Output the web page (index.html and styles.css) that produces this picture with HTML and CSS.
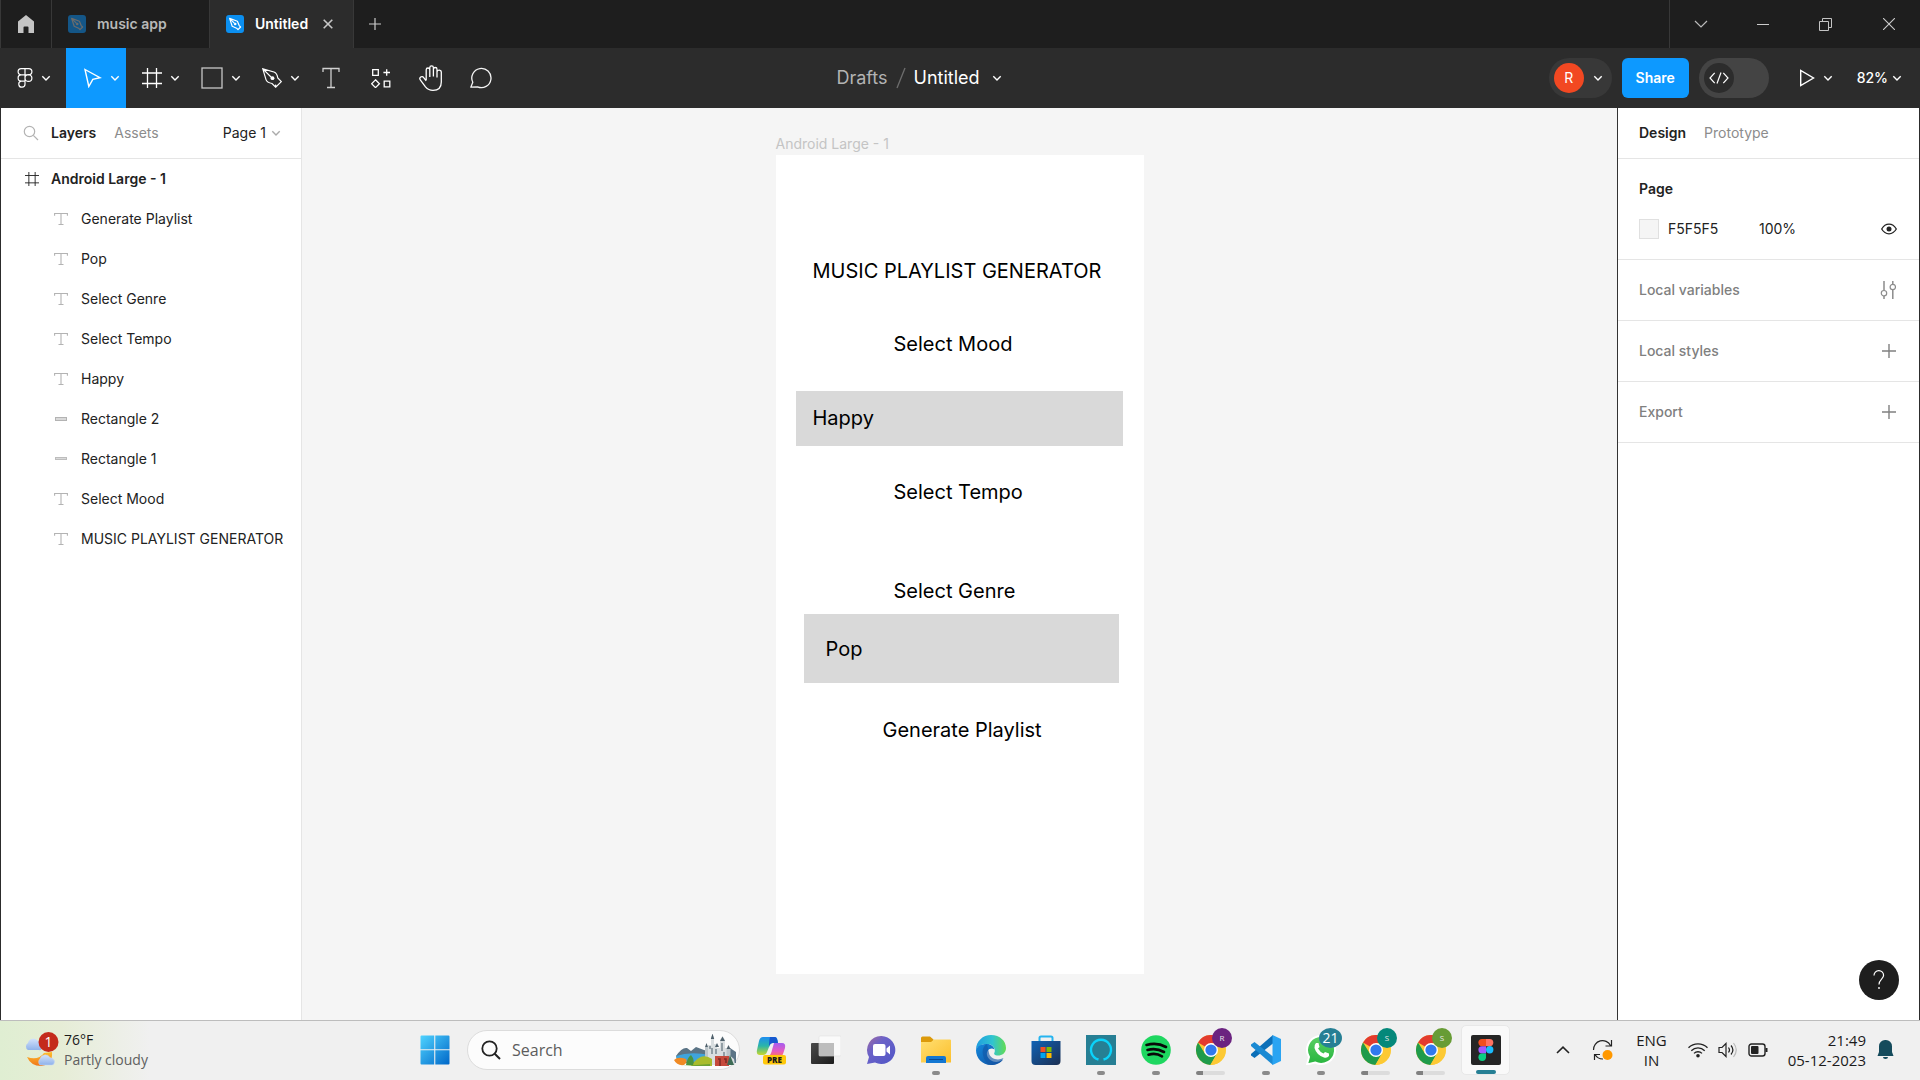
FILE: index.html
```html
<!DOCTYPE html>
<html lang="en">
<head>
<meta charset="utf-8">
<title>Untitled</title>
<meta name="viewport" content="width=device-width, initial-scale=1">
<link rel="stylesheet" href="styles.css">
</head>
<body>
<svg class="defs" aria-hidden="true">
  <defs>
    <linearGradient id="g-win" x1="0" y1="0" x2="1" y2="1"><stop offset="0" stop-color="#4fd3ff"/><stop offset="1" stop-color="#0067c8"/></linearGradient>
    <linearGradient id="g-moon" x1="0" y1="0" x2="0" y2="1"><stop offset="0" stop-color="#ffc02e"/><stop offset="1" stop-color="#f0761a"/></linearGradient>
    <linearGradient id="g-cloud" x1="0" y1="0" x2="0" y2="1"><stop offset="0" stop-color="#d3e2fb"/><stop offset="1" stop-color="#8fb2ea"/></linearGradient>
    <linearGradient id="g-cop1" x1="0" y1="0" x2="0" y2="1"><stop offset="0" stop-color="#1d8df0"/><stop offset=".5" stop-color="#2bb5a8"/><stop offset="1" stop-color="#c8d82c"/></linearGradient>
    <linearGradient id="g-cop2" x1="0" y1="0" x2="0" y2="1"><stop offset="0" stop-color="#a45df0"/><stop offset=".6" stop-color="#e85bc0"/><stop offset="1" stop-color="#ff7a50"/></linearGradient>
    <linearGradient id="g-dark" x1="0" y1="0" x2="1" y2="1"><stop offset="0" stop-color="#4a4a4a"/><stop offset="1" stop-color="#1c1c1c"/></linearGradient>
    <linearGradient id="g-chat" x1="0" y1="0" x2="1" y2="1"><stop offset="0" stop-color="#a26a9e"/><stop offset=".35" stop-color="#6b62c8"/><stop offset="1" stop-color="#4f55c6"/></linearGradient>
    <linearGradient id="g-folder" x1="0" y1="0" x2="1" y2="1"><stop offset="0" stop-color="#ffdf72"/><stop offset="1" stop-color="#fcbf2c"/></linearGradient>
    <linearGradient id="g-edge1" x1="0" y1="0" x2="1" y2="0"><stop offset="0" stop-color="#1f9de0"/><stop offset=".55" stop-color="#30c4d0"/><stop offset="1" stop-color="#63dc52"/></linearGradient>
    <linearGradient id="g-edge2" x1="0" y1="0" x2="1" y2="1"><stop offset="0" stop-color="#1288dd"/><stop offset="1" stop-color="#124f9e"/></linearGradient>
    <linearGradient id="g-store" x1="0" y1="0" x2="1" y2="1"><stop offset="0" stop-color="#0f62b5"/><stop offset="1" stop-color="#1c2f52"/></linearGradient>
    <linearGradient id="g-wa" x1="0" y1="0" x2="0" y2="1"><stop offset="0" stop-color="#5bd066"/><stop offset="1" stop-color="#27b43e"/></linearGradient>
    <symbol id="chev" viewBox="0 0 10 10"><path d="M1.3 3.2 5 6.9 8.7 3.2" fill="none" stroke="currentColor" stroke-width="1.4"/></symbol>
    <symbol id="penfile" viewBox="0 0 18 18"><rect width="18" height="18" rx="3" fill="#0b8ff0"/><path d="M3.6 3.4 6.2 11.2 10.6 13.2 12 14.6 14.6 12 13.2 10.6 11.4 6.2Z M3.6 3.4 8.3 8.1" fill="none" stroke="currentColor" stroke-width="1.2" stroke-linejoin="round"/><circle cx="9.2" cy="9" r="1.3" fill="currentColor"/></symbol>
    <symbol id="text" viewBox="0 0 14 14"><path d="M.6 3.8V1.5H13.400V3.800M7 1.500V12.500M4.500 12.500H9.500" fill="none" stroke="currentColor" stroke-width="1.100"/></symbol>
    <symbol id="plus" viewBox="0 0 14 14"><path d="M7 0V14M0 7H14" fill="none" stroke="currentColor" stroke-width="1.400"/></symbol>
    <symbol id="hash" viewBox="0 0 20 20"><path d="M5.500 0V20M14.500 0V20M0 5H20M0 15.500H20" fill="none" stroke="currentColor" stroke-width="1.300"/></symbol>
    <symbol id="chrome" viewBox="0 0 30 30"><circle cx="15" cy="15" r="15" fill="#fcc934"/><path d="M15 15 2 7.500A15 15 0 0 1 28 7.500L28 8.200H15Z" fill="#e33b2e"/><path d="M2 7.500A15 15 0 0 0 14.400 30L21 18.500 15 15 8.900 18.500Z" fill="#1f9b4b"/><path d="M15 8.200H28A15 15 0 0 1 14.400 30L21 18.500Z" fill="#fcc934"/><circle cx="15" cy="15" r="7" fill="#fff"/><circle cx="15" cy="15" r="5.600" fill="#3179ed"/></symbol>
  </defs>
</svg>

<header class="tabs">
  <button class="tab-home" aria-label="Home"><svg width="18" height="18" viewBox="0 0 18 18"><path d="M9 0 17 6.500V18H11.500V12.500A1 1 0 0 0 10.500 11.500H7.500A1 1 0 0 0 6.500 12.500V18H1V6.500Z" fill="#c4c4c4"/></svg></button>
  <button class="tab"><svg class="dim" width="18" height="18"><use href="#penfile"/></svg><span>music app</span></button>
  <div class="tab active"><svg width="18" height="18"><use href="#penfile"/></svg><span>Untitled</span><button class="close" aria-label="Close tab"><svg width="10" height="10" viewBox="0 0 10 10"><path d="M.7.700 9.300 9.300M9.300.700.700 9.300" stroke="#c8c8c8" stroke-width="1.600"/></svg></button></div>
  <button class="tab-new" aria-label="New tab"><svg width="12" height="12"  viewBox="0 0 14 14"><use href="#plus"/></svg></button>
  <div class="window-controls">
    <button class="tab-menu" aria-label="Tab list"><svg width="14" height="8" viewBox="0 0 14 8"><path d="M1 1 7 7 13 1" fill="none" stroke="#bbb" stroke-width="1.200"/></svg></button>
    <button aria-label="Minimize"><svg width="12" height="12" viewBox="0 0 12 12"><path d="M0 6.500H12" stroke="#ccc"/></svg></button>
    <button aria-label="Restore"><svg width="13" height="13" viewBox="0 0 13 13"><path d="M.5 3.500H9.500V12.500H.500ZM3.500 3.500V.500H12.500V9.500H9.500" fill="none" stroke="#c4c4c4"/></svg></button>
    <button aria-label="Close"><svg width="12" height="12" viewBox="0 0 12 12"><path d="M0 0 12 12M12 0 0 12" stroke="#ccc" stroke-width="1.100"/></svg></button>
  </div>
</header>

<nav class="toolbar">
  <div class="tools">
    <button class="tool main-menu" aria-label="Main menu"><svg width="16" height="20" viewBox="0 0 16 20"><path d="M8 .700H4.200A3.100 3.100 0 0 0 4.200 6.900H8ZM8 .700H11.800A3.100 3.100 0 0 1 11.800 6.900H8ZM8 6.900H4.200A3.100 3.100 0 0 0 4.200 13.100H8ZM8 13.100H4.200A3.100 3.100 0 1 0 8 16.200ZM8 10A3.100 3.100 0 1 0 14.900 10 3.400 3.400 0 0 0 8 10Z" fill="none" stroke="#fff" stroke-width="1.200"/></svg><svg width="10" height="10"><use href="#chev"/></svg></button>
    <button class="tool picked" aria-label="Move"><svg width="20" height="20" viewBox="0 0 20 20"><path d="M3 1.500 18 9.700 10.800 11.300 6.800 18.500Z" fill="none" stroke="#fff" stroke-width="1.400"/></svg><svg width="10" height="10"><use href="#chev"/></svg></button>
    <button class="tool" aria-label="Frame"><svg width="20" height="20"><use href="#hash"/></svg><svg width="10" height="10"><use href="#chev"/></svg></button>
    <button class="tool" aria-label="Rectangle"><svg width="22" height="22" viewBox="0 0 22 22"><rect x="1" y="1" width="20" height="20" fill="none" stroke="#c6c6c6" stroke-width="1.300"/></svg><svg width="10" height="10"><use href="#chev"/></svg></button>
    <button class="tool" aria-label="Pen"><svg width="20" height="20" viewBox="0 0 20 20"><path d="M.8.800 4 11.600Q5 14.500 10 15.500L13.700 19.200 19.300 13.700 15.800 10Q15 5 12 4ZM.8.800 10 10M13.500 16.600 14 19" fill="none" stroke="#fff" stroke-width="1.200"/><circle cx="10.500" cy="10.200" r="1.900" fill="#fff"/></svg><svg width="10" height="10"><use href="#chev"/></svg></button>
    <button class="tool single" aria-label="Text"><svg width="18" height="22" viewBox="0 0 18 22"><path d="M1 5V1.500H17V5M9 1.500V20.500M5 20.500H13" fill="none" stroke="#d0d0d0" stroke-width="1.300"/></svg></button>
    <button class="tool single" aria-label="Resources"><svg width="20" height="20" viewBox="0 0 20 20"><path d="M1.700 1.700H7.300V7.300H1.700ZM13.200 13.200H18.800V18.800H13.200ZM4.500 11.800 8.400 15.700 4.500 19.600.600 15.700ZM15.700 1.200V7.800M12.400 4.500H19" fill="none" stroke="#fff" stroke-width="1.300"/></svg></button>
    <button class="tool single" aria-label="Hand"><svg width="24" height="26" viewBox="0 0 24 26"><path d="M7.200 15V4.800A1.800 1.800 0 0 1 10.800 4.800V12M10.800 11V2.700A1.800 1.800 0 0 1 14.400 2.700V11.500M14.400 4.300A1.800 1.800 0 0 1 18 4.300V12.500M18 7A1.700 1.700 0 0 1 22.300 7.500V17Q22.300 25.300 14 25.300 9.500 25.300 6.500 21.800L1.300 14.800A2 2 0 0 1 4.500 12.400L7.200 15.800" fill="none" stroke="#fff" stroke-width="1.300" stroke-linejoin="round"/></svg></button>
    <button class="tool single" aria-label="Comment"><svg width="22" height="22" viewBox="0 0 22 22"><path d="M.8 20.200 2.800 15.300A9.600 9.600 0 1 1 7.500 19.800Z" fill="none" stroke="#f4f4f4" stroke-width="1.300" stroke-linejoin="round"/></svg></button>
  </div>
  <div class="file-title">
    <a href="#drafts">Drafts</a>
    <svg width="10" height="22" viewBox="0 0 10 22"><path d="M1 21 9 1" stroke="#6e6e6e" stroke-width="1.300"/></svg>
    <button class="file-name">Untitled<svg width="10" height="10"><use href="#chev"/></svg></button>
  </div>
  <div class="actions">
    <button class="people" aria-label="Account R"><span class="avatar">R</span><svg width="10" height="10"><use href="#chev"/></svg></button>
    <button class="share">Share</button>
    <label class="dev-toggle"><input type="checkbox" aria-label="Dev Mode"><span class="knob"><svg width="20" height="12" viewBox="0 0 20 12"><path d="M5.700.800 1 6 5.700 11.200M14.300.800 19 6 14.300 11.200M12 .500 8 11.500" fill="none" stroke="#fff" stroke-width="1.200"/></svg></span></label>
    <button class="plain play" aria-label="Present"><svg width="16" height="18" viewBox="0 0 16 18"><path d="M1.700 1.500V16.500L14.500 9Z" fill="none" stroke="#fff" stroke-width="1.400"/></svg><svg width="10" height="10"><use href="#chev"/></svg></button>
    <button class="plain zoom">82%<svg width="10" height="10"><use href="#chev"/></svg></button>
  </div>
</nav>

<main class="workspace">
  <aside class="layers">
    <div class="panel-head">
      <button class="find" aria-label="Search layers"><svg width="16" height="16" viewBox="0 0 16 16"><circle cx="6.500" cy="6.500" r="5.200" fill="none" stroke="#b3b3b3" stroke-width="1.200"/><path d="M10.300 10.300 15 15" stroke="#b3b3b3" stroke-width="1.200"/></svg></button>
      <button class="on">Layers</button>
      <button class="off">Assets</button>
      <button class="page-pick">Page 1<svg width="10" height="10"><use href="#chev"/></svg></button>
    </div>
    <ul class="layer-list">
      <li class="frame"><svg width="14" height="14"><use href="#hash"/></svg>Android Large - 1</li>
      <li><svg width="14" height="14"><use href="#text"/></svg>Generate Playlist</li>
      <li><svg width="14" height="14"><use href="#text"/></svg>Pop</li>
      <li><svg width="14" height="14"><use href="#text"/></svg>Select Genre</li>
      <li><svg width="14" height="14"><use href="#text"/></svg>Select Tempo</li>
      <li><svg width="14" height="14"><use href="#text"/></svg>Happy</li>
      <li><svg width="14" height="14" viewBox="0 0 14 14"><rect x="1.500" y="5.500" width="11" height="3" fill="#d9d9d9" stroke="#b3b3b3"/></svg>Rectangle 2</li>
      <li><svg width="14" height="14" viewBox="0 0 14 14"><rect x="1.500" y="5.500" width="11" height="2" fill="#d9d9d9" stroke="#bdbdbd"/></svg>Rectangle 1</li>
      <li><svg width="14" height="14"><use href="#text"/></svg>Select Mood</li>
      <li><svg width="14" height="14"><use href="#text"/></svg>MUSIC PLAYLIST GENERATOR</li>
    </ul>
  </aside>

  <section class="canvas">
    <div class="artboard">
      <span class="artboard-name">Android Large - 1</span>
      <span class="node heading">MUSIC PLAYLIST GENERATOR</span>
      <span class="node mood">Select Mood</span>
      <div class="box box-mood"></div>
      <span class="node happy">Happy</span>
      <span class="node tempo">Select Tempo</span>
      <span class="node genre">Select Genre</span>
      <div class="box box-genre"></div>
      <span class="node pop">Pop</span>
      <span class="node generate">Generate Playlist</span>
    </div>
  </section>

  <aside class="inspector">
    <div class="panel-head">
      <button class="on">Design</button>
      <button class="off">Prototype</button>
    </div>
    <section class="page-fill">
      <h2>Page</h2>
      <div class="fill-row">
        <span class="swatch"></span>
        <input class="hex" type="text" value="F5F5F5" aria-label="Page colour">
        <input class="opacity" type="text" value="100%" aria-label="Opacity">
        <button aria-label="Toggle visibility"><svg width="16" height="12" viewBox="0 0 16 12"><path d="M.7 6Q3.500 1.200 8 1.200T15.300 6Q12.500 10.800 8 10.800T.700 6Z" fill="none" stroke="#222" stroke-width="1.300"/><circle cx="8" cy="6" r="2.500" fill="#222"/></svg></button>
      </div>
    </section>
    <section class="row">Local variables<button aria-label="Open variables"><svg width="16" height="18" viewBox="0 0 16 18"><path d="M4 0V9.500M4 15V18M12.800 0V3.200M12.800 8.700V18" stroke="#8c8c8c" stroke-width="1.500"/><circle cx="4" cy="12.200" r="2.700" fill="none" stroke="#8c8c8c" stroke-width="1.200"/><circle cx="12.800" cy="6" r="2.700" fill="none" stroke="#8c8c8c" stroke-width="1.200"/></svg></button></section>
    <section class="row">Local styles<button aria-label="Add style"><svg width="14" height="14"><use href="#plus"/></svg></button></section>
    <section class="row">Export<button aria-label="Add export"><svg width="14" height="14"><use href="#plus"/></svg></button></section>
    <button class="help" aria-label="Help"><svg width="12" height="20" viewBox="0 0 12 20"><path d="M1 5.500A4.800 4.800 0 0 1 10.600 5.300C10.600 9 6 9.500 6 14.500" fill="none" stroke="#fff" stroke-width="1.200"/><circle cx="6" cy="18" r=".9" fill="#fff"/></svg></button>
  </aside>
</main>

<footer class="taskbar">
  <button class="weather">
    <svg width="36" height="36" viewBox="0 0 36 36"><path d="M4 18A4 4 0 0 1 4 11 5.500 5.500 0 0 1 14 9Q18 9 18 14T15 18Z" fill="url(#g-cloud)"/><path d="M3 25Q14 29 20 21L28 20Q29 33 17 34 7 34 3 25Z" fill="url(#g-moon)"/><path d="M16 33A4 4 0 0 1 16 27 5.500 5.500 0 0 1 26 25.500Q31 27 30.500 30T28 33Z" fill="url(#g-cloud)" stroke="#c4d6f6" stroke-width=".5"/><circle cx="24.500" cy="10" r="10" fill="#c42b1c"/><text x="24.500" y="15" text-anchor="middle" class="badge-text">1</text></svg>
    <span class="stack"><span>76°F</span><span class="muted">Partly cloudy</span></span>
  </button>

  <div class="apps">
    <button class="app" aria-label="Start"><svg width="30" height="30" viewBox="0 0 30 30"><path d="M1.500.500H14.200V14.200H.500V1.500A1 1 0 0 1 1.500.500ZM15.300.500H28.500A1 1 0 0 1 29.500 1.500V14.200H15.300ZM.500 15.300H14.200V29.500H1.500A1 1 0 0 1 .500 28.500ZM15.300 15.300H29.500V28.500A1 1 0 0 1 28.500 29.500H15.300Z" fill="url(#g-win)"/></svg></button>
    <label class="search">
      <svg width="20" height="20" viewBox="0 0 20 20"><circle cx="8.500" cy="8.500" r="7.200" fill="none" stroke="#222" stroke-width="1.800"/><path d="M13.700 13.700 19 19" stroke="#222" stroke-width="2"/></svg>
      <input type="text" placeholder="Search" aria-label="Search">
      <svg width="62" height="32" viewBox="0 0 62 32">
        <path d="M2 22Q8 13 13 14L17 17 22 13 30 16 45 20 56 14 62 18V29H4Z" fill="#5b7486"/>
        <path d="M2 22Q16 17 36 21V28H4Z" fill="#3fa4dc"/>
        <path d="M34 31V11H37V4L38.500 0 40 4V10H43V14H46V6L48.500 2 51 6V14H54V20L60 25 61 31Z" fill="#d9dee0"/>
        <path d="M36.800 5 38.500-.500 40.200 5ZM46 7 48.500 2.500 51 7ZM31 13 32.500 9 34 13ZM41 13 43 9 45 13ZM52.500 15 54.500 11 56.500 15Z" fill="#50616c"/>
        <path d="M31 13H34V24H31ZM52.500 15H56.500V26H52.500Z" fill="#bcc5ca"/>
        <path d="M38 14V20M42 15V20M48 9V17M36 12V15M50 18V23" stroke="#63737d" stroke-width="1.200"/>
        <path d="M41 22H55V32H41Z" fill="#c64a3c"/><path d="M44 25H46V32M50 25H52V29" stroke="#7d2b24" stroke-width="1.500" fill="none"/>
        <path d="M56 21 60 31H53Z" fill="#3d6b55"/>
        <path d="M17 32Q27 17 38 25V32Z" fill="#a9bc2c"/><path d="M12 31Q13 24 17 21 21 26 19 31Z" fill="#4a9440"/>
        <path d="M0 26Q4 22 12 25 14 28 10 31 3 32 0 26Z" fill="#f08a24"/><path d="M9 32H36V30Z" fill="#6da034"/>
      </svg>
    </label>
    <button class="app" aria-label="Copilot"><svg width="30" height="30" viewBox="0 0 30 30"><path d="M7 2H19Q21 2 21.500 5L22 8H17Q14 8 13 12L11 17Q10 20 7 20H4Q0 20 1 15L3 6Q4 2 7 2Z" fill="url(#g-cop1)"/><path d="M14 2H19Q21 2 22 8H17Q14 8 13 12 13 5 14 2Z" fill="#1658cf"/><path d="M18 8H26Q30 8 29 13L27 19Q26 22 22 22H12Q15 20 16 15Z" fill="url(#g-cop2)"/><rect x="7" y="20" width="23" height="9.500" rx="2" fill="#ffc80a"/><text x="18.500" y="27.800" text-anchor="middle" class="pre-text">PRE</text></svg></button>
    <button class="app" aria-label="Task view"><svg width="30" height="30" viewBox="0 0 30 30"><rect x="0" y="8" width="23" height="21" rx="1" fill="url(#g-dark)"/><rect x="8" y="1" width="22" height="20" rx="1" fill="#fafafa" stroke="#e2e2e2" stroke-width=".6"/><path d="M8 8H23V21H8Z" fill="#bdbdbd"/></svg></button>
    <button class="app" aria-label="Chat"><svg width="30" height="30" viewBox="0 0 30 30"><path d="M15.500 1A14 14 0 1 1 9 27.500L1 29 3 22A14 14 0 0 1 15.500 1Z" fill="url(#g-chat)"/><rect x="7" y="9" width="12.500" height="12" rx="2" fill="#fff"/><path d="M20.500 13.500 24 10.500V19.500L20.500 16.500Z" fill="#fff"/></svg></button>
    <button class="app run" aria-label="File Explorer"><svg width="30" height="30" viewBox="0 0 30 30"><path d="M0 3A1.500 1.500 0 0 1 1.500 1.500H9L12.500 4.500V8H0Z" fill="#dc9a0b"/><path d="M0 7H10L13 4.500H29A1 1 0 0 1 30 5.500V27.500H0Z" fill="url(#g-folder)"/><path d="M5 28V23A2 2 0 0 1 7 21H23A2 2 0 0 1 25 23V28Z" fill="#1377d2"/><path d="M8 24.500H22" stroke="#0a4a93"/></svg></button>
    <button class="app" aria-label="Edge"><svg width="30" height="30" viewBox="0 0 30 30"><path d="M15 0C24 0 30 6 30 13 30 18 26 20.500 22 20.500 18.500 20.500 17.500 19 18.500 17.500 20 14 17 9 11 9 5 9 1 12 0 15 0 6 7 0 15 0Z" fill="url(#g-edge1)"/><path d="M0 15C1 11 5 9 11 9 15 9 18 11.500 18.500 14.500 15 11.500 10 15 11 20 12 25 18 28 23 26.500L27 24.500C25 28 20 30 15 30 6 30 0 23 0 15Z" fill="url(#g-edge2)"/><path d="M11 9C5 12 5 22 12 29.500 18 31 25 28 27.500 23 22 26 14 24 13 18Z" fill="#1357a8" opacity=".65"/></svg></button>
    <button class="app" aria-label="Microsoft Store"><svg width="30" height="30" viewBox="0 0 30 30"><path d="M8.500 6V3A1.500 1.500 0 0 1 10 1.500H20A1.500 1.500 0 0 1 21.500 3V6" fill="none" stroke="#25b4ef" stroke-width="2"/><path d="M.5 6H29.500V26A4 4 0 0 1 25.500 30H4.500A4 4 0 0 1 .500 26Z" fill="url(#g-store)"/><path fill="#f25022" d="M9.500 12H14.500V17H9.500Z"/><path fill="#7fba00" d="M15.500 12H20.500V17H15.500Z"/><path fill="#00a4ef" d="M9.500 18H14.500V23H9.500Z"/><path fill="#ffb900" d="M15.500 18H20.500V23H15.500Z"/></svg></button>
    <button class="app run" aria-label="Alexa"><svg width="30" height="30" viewBox="0 0 30 30"><path fill="#267f94" d="M0 0H30V30H0Z"/><path d="M12.500 24.500A10 10 0 1 1 17.500 24.500" fill="none" stroke="#0bd3fb" stroke-width="2.400"/></svg></button>
    <button class="app run" aria-label="Spotify"><svg width="30" height="30" viewBox="0 0 30 30"><circle cx="15" cy="15" r="14.800" fill="#1ed760"/><path d="M5.500 10Q16 7 25 12M6.500 15Q15 12.500 23 17M7.500 19.700Q15 17.500 21 21.300" fill="none" stroke="#080808" stroke-width="2.600" stroke-linecap="round"/></svg></button>
    <button class="app many" aria-label="Chrome R"><svg width="30" height="30"><use href="#chrome"/></svg><span class="badge purple">R</span></button>
    <button class="app run" aria-label="Visual Studio Code"><svg width="30" height="30" viewBox="0 0 30 30"><path d="M22 0V8.500L3.500 23 0 20.500V19Z" fill="#0b6fb8"/><path d="M22 30V21.500L3.500 7 0 9.500V11Z" fill="#1b8ad3"/><path d="M21.500 0 30 4V26L21.500 30Z" fill="#2aa4f2"/></svg></button>
    <button class="app run" aria-label="WhatsApp"><svg width="30" height="30" viewBox="0 0 30 30"><path d="M1 29.500 3 22A14 14 0 1 1 9 27.500Z" fill="url(#g-wa)" stroke="#fff" stroke-width="2"/><path d="M10 8 12.500 8 13.500 12 12 13.500Q14 17 17.500 18.500L19 17 23 18.500V21Q21 23.500 18 22.500 10.500 20 8.500 13 8 10 10 8Z" fill="#fff"/></svg><span class="badge count">21</span></button>
    <button class="app many" aria-label="Chrome S"><svg width="30" height="30"><use href="#chrome"/></svg><span class="badge teal">S</span></button>
    <button class="app many" aria-label="Chrome S, second profile"><svg width="30" height="30"><use href="#chrome"/></svg><span class="badge olive">S</span></button>
    <button class="app current" aria-label="Figma"><svg width="30" height="30" viewBox="0 0 30 30"><rect width="30" height="30" rx="2" fill="#252525"/><path d="M15 4H11A3.600 3.600 0 0 0 11 11.200H15Z" fill="#f24e1e"/><path d="M15 4H18.700A3.600 3.600 0 0 1 18.700 11.200H15Z" fill="#ff7262"/><path d="M15 11.200H11A3.600 3.600 0 0 0 11 18.400H15Z" fill="#a259ff"/><circle cx="18.700" cy="14.800" r="3.700" fill="#1abcfe"/><path d="M15 18.400H11A3.800 3.800 0 1 0 15 22.300Z" fill="#0acf83"/></svg></button>
  </div>

  <div class="tray">
    <button aria-label="Show hidden icons"><svg width="14" height="8" viewBox="0 0 14 8"><path d="M1 7 7 1.200 13 7" fill="none" stroke="#222" stroke-width="1.600"/></svg></button>
    <button class="sync" aria-label="Updates"><svg width="22" height="22" viewBox="0 0 22 22"><path d="M1.500 11A9 9 0 0 1 18.500 6.500M19.500 1V7H13.500M11 20A9 9 0 0 1 3 15.500M2.500 21V15.500H8" fill="none" stroke="#222" stroke-width="1.200"/><circle cx="15.500" cy="16" r="5" fill="#ff9800"/></svg></button>
    <button class="stack lang"><span>ENG</span><span>IN</span></button>
    <button class="status" aria-label="Network, volume, battery">
      <svg width="20" height="16" viewBox="0 0 20 16"><path d="M.5 5.800A13.500 13.500 0 0 1 19.500 5.800M3.300 8.700A9.500 9.500 0 0 1 16.700 8.700M6 11.400A5.700 5.700 0 0 1 14 11.400" fill="none" stroke="#222" stroke-width="1.300"/><circle cx="10" cy="13.800" r="1.800" fill="#222"/></svg>
      <svg width="20" height="16" viewBox="0 0 20 16"><path d="M1 5.500H4L8 1.500V14.500L4 10.500H1Z" fill="none" stroke="#222" stroke-width="1.200"/><path d="M10.500 5.500Q12.500 8 10.500 10.500M13 3.500Q16.800 8 13 12.500" fill="none" stroke="#222" stroke-width="1.200"/><path d="M15.500 1Q21 8 15.500 15" fill="none" stroke="#bbb" stroke-width="1.200"/></svg>
      <svg width="20" height="14" viewBox="0 0 20 14"><rect x="1" y="1" width="16" height="12" rx="2.500" fill="none" stroke="#222" stroke-width="1.400"/><rect x="3" y="3" width="7.500" height="8" rx="1" fill="#222"/><path d="M18.500 5V9" stroke="#222" stroke-width="2"/></svg>
    </button>
    <button class="stack clock"><span>21:49</span><span>05-12-2023</span></button>
    <button aria-label="Notifications"><svg width="17" height="20" viewBox="0 0 17 20"><path d="M8.500 0A6.300 6.300 0 0 1 15 6.500V12L16.500 16H.500L2 12V6.500A6.300 6.300 0 0 1 8.500 0ZM6 17H11A2.500 2 0 0 1 6 17Z" fill="#154b5c"/></svg></button>
  </div>
</footer>
</body>
</html>
```
FILE: styles.css
```css
* { box-sizing: border-box; }

body {
  margin: 0;
  min-height: 100vh;
  display: flex;
  flex-direction: column;
  font-family: Inter, "Liberation Sans", sans-serif;
  font-size: 14px;
  line-height: 20px;
  color: #222;
  background: #f5f5f5;
}

button, input {
  font: inherit;
  color: inherit;
  background: none;
  border: 0;
  padding: 0;
  margin: 0;
}

button {
  display: flex;
  align-items: center;
  justify-content: center;
}

svg { display: block; flex: none; }

.defs { position: absolute; width: 0; height: 0; }

/* Window tabs */
.tabs {
  display: flex;
  height: 48px;
  background: #1e1e1e;
  color: #b8b8b8;
  font-weight: 600;
  border-left: 1px solid #383838;
}

.tab-home { width: 51px; border-right: 1px solid #383838; }

.tab {
  display: flex;
  align-items: center;
  justify-content: flex-start;
  gap: 11px;
  width: 158px;
  padding-left: 16px;
  border-right: 1px solid #383838;
}

.tab.active { width: 144px; background: #2c2c2c; color: #fff; }
.dim { opacity: .5; }
.close { margin-left: 4px; }
.tab-new { width: 42px; color: #ccc; }

.window-controls {
  display: flex;
  margin-left: auto;
  border-left: 1px solid #383838;
}

.window-controls button { width: 63px; }
.window-controls .tab-menu { width: 61px; }

/* Toolbar */
.toolbar {
  display: grid;
  grid-template-columns: 1fr auto 1fr;
  height: 60px;
  background: #2c2c2c;
  color: #fff;
}

.tools, .actions { display: flex; }

.tool {
  width: 60px;
  gap: 8px;
  padding-left: 9px;
}

.main-menu { width: 66px; padding: 0 0 0 2px; }
.tool.picked { background: #0d99ff; }
.tool.single { width: 50px; padding: 0; }

.file-title {
  display: flex;
  align-items: center;
  gap: 8px;
  padding-right: 82px;
  font-size: 18px;
}

.file-title a { color: #b3b3b3; text-decoration: none; }
.file-name { gap: 12px; }

.actions {
  align-items: center;
  justify-content: flex-end;
  gap: 10px;
  padding-right: 18px;
}

.people {
  width: 63px;
  height: 40px;
  padding-right: 4px;
  gap: 9px;
  border-radius: 20px;
  background: #383838;
}

.avatar {
  width: 30px;
  height: 30px;
  border-radius: 50%;
  background: #f24822;
  line-height: 30px;
}

.share {
  width: 67px;
  height: 40px;
  border-radius: 6px;
  background: #0d99ff;
  font-weight: 600;
}

.dev-toggle {
  position: relative;
  width: 70px;
  height: 40px;
  padding: 5px;
  border-radius: 20px;
  background: #444;
}

.dev-toggle input { position: absolute; opacity: 0; }

.knob {
  display: flex;
  align-items: center;
  justify-content: center;
  width: 30px;
  height: 30px;
  border-radius: 50%;
  background: #2c2c2c;
}

.play { margin-left: 20px; gap: 8px; }
.zoom { margin-left: 14px; gap: 4px; font-weight: 500; }

/* Workspace */
.workspace { display: flex; flex: 1; }

.panel-head {
  display: flex;
  align-items: center;
  gap: 18px;
  height: 51px;
  border-bottom: 1px solid #e5e5e5;
}

.on { font-weight: 600; }
.off { color: #8c8c8c; }

.layers {
  width: 302px;
  background: #fff;
  border-left: 1px solid #2c2c2c;
  border-right: 1px solid #e5e5e5;
}

.layers .panel-head { padding: 0 20px 0 22px; }
.find { margin-right: -6px; }
.page-pick { margin-left: auto; gap: 5px; }
.page-pick svg { color: #aaa; }

.layer-list { list-style: none; margin: 0; padding: 0; }

.layer-list li {
  display: flex;
  align-items: center;
  gap: 13px;
  height: 40px;
  padding-left: 53px;
  white-space: nowrap;
}

.layer-list li svg { color: #b3b3b3; }
.layer-list .frame { padding-left: 24px; gap: 12px; font-weight: 600; }
.layer-list .frame svg { color: #222; }

.canvas { flex: 1; padding-top: 47px; background: #f5f5f5; }

.artboard {
  position: relative;
  width: 368px;
  height: 819px;
  margin: 0 auto;
  background: #fff;
  color: #000;
}

.artboard-name { position: absolute; left: 0; top: -21px; color: #c4c4c4; }

.node {
  position: absolute;
  font-size: 20px;
  line-height: 24px;
  white-space: nowrap;
}

.heading { left: 37px; top: 104px; }
.mood { left: 118px; top: 177px; }
.happy { left: 37px; top: 251px; }
.tempo { left: 118px; top: 325px; }
.genre { left: 118px; top: 424px; }
.pop { left: 50px; top: 482px; }
.generate { left: 107px; top: 563px; }

.box { position: absolute; background: #d9d9d9; }
.box-mood { left: 20px; top: 236px; width: 327px; height: 55px; }
.box-genre { left: 28px; top: 459px; width: 315px; height: 69px; }

.inspector {
  position: relative;
  width: 303px;
  background: #fff;
  border-left: 1px solid #333;
  border-right: 1px solid #2c2c2c;
}

.inspector .panel-head { padding-left: 21px; }

.page-fill {
  padding: 20px 22px 20px 21px;
  border-bottom: 1px solid #e5e5e5;
}

.page-fill h2 { margin: 0 0 20px; font-size: 14px; font-weight: 600; }
.fill-row { display: flex; align-items: center; }
.swatch { width: 20px; height: 20px; border: 1px solid #e0e0e0; background: #f5f5f5; }
.hex { width: 81px; margin-left: 9px; }
.opacity { width: 60px; margin-left: 10px; }
.fill-row button { margin-left: auto; }

.row {
  display: flex;
  align-items: center;
  justify-content: space-between;
  height: 61px;
  padding: 0 23px 0 21px;
  border-bottom: 1px solid #e5e5e5;
  color: #808080;
  font-weight: 500;
}

.help {
  position: absolute;
  right: 20px;
  bottom: 20px;
  width: 40px;
  height: 40px;
  border-radius: 50%;
  background: #1e1e1e;
}

/* Taskbar */
.taskbar {
  display: grid;
  grid-template-columns: 1fr auto 1fr;
  height: 60px;
  padding-bottom: 2px;
  border-top: 1px solid #bdbdbd;
  background: linear-gradient(90deg, #dfeed2, #e6edd6 60px, #f0f0f0 150px);
  font-family: "Open Sans", "Noto Sans", sans-serif;
  font-size: 14px;
  color: #1b1b1b;
}

.weather { justify-self: start; gap: 4px; padding-left: 24px; }
.stack { display: flex; flex-direction: column; align-items: flex-start; justify-content: center; }
.muted { color: #606060; }
.badge-text { font-size: 14px; fill: #fff; }
.pre-text { font-size: 8px; font-weight: 800; fill: #1b1b1b; }

.apps { display: flex; align-items: center; }

.app { position: relative; width: 55px; height: 57px; }

.search {
  display: flex;
  align-items: center;
  width: 273px;
  height: 40px;
  margin: 0 3px 0 5px;
  padding: 0 3px 0 13px;
  border: 1px solid #dcdcdc;
  border-radius: 20px;
  background: #fcfcfc;
}

.search input { flex: 1; min-width: 0; margin-left: 11px; font-size: 16px; }
.search input::placeholder { color: #5c5c5c; opacity: 1; }

.run::after, .many::after, .current::after {
  content: "";
  position: absolute;
  left: 24px;
  bottom: 3px;
  width: 8px;
  height: 4px;
  border-radius: 2px;
  background: #8a8a8a;
}

.many::after {
  left: 13px;
  width: 29px;
  background: linear-gradient(90deg, #808080 7px, #dcdcdc 7px);
}

.current { width: 49px; height: 50px; margin: 0 3px; border: 1px solid #e8e8e8; border-radius: 5px; background: #f9f9f9; }
.current::after { left: 14px; bottom: 0; width: 20px; background: #267f94; }

.badge {
  position: absolute;
  right: 6px;
  top: 7px;
  width: 20px;
  height: 20px;
  border-radius: 50%;
  color: #e8e8e8;
  font-size: 8px;
  line-height: 20px;
}

.purple { background: #6b2380; }
.teal { background: #04887a; }
.olive { background: #679c35; }
.count { width: 23px; background: #267f94; color: #fff; font-size: 14px; }

.tray { display: flex; align-items: center; justify-content: flex-end; padding-right: 26px; font-size: 15px; }
.sync { margin-left: 22px; }
.lang { align-items: center; margin-left: 22px; }
.status { gap: 10px; margin-left: 21px; }
.clock { align-items: flex-end; margin-left: 20px; }
.clock + button { margin-left: 11px; }
```
